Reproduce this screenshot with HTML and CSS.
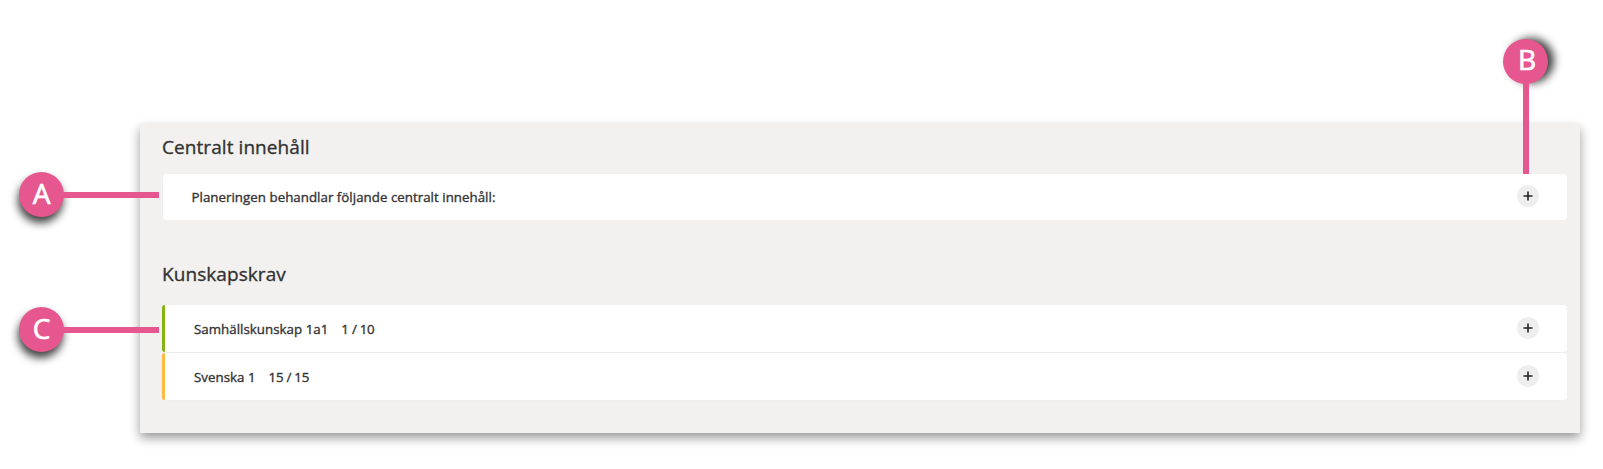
FILE: index.html
```html
<!DOCTYPE html>
<html lang="sv">
<head>
    <meta charset="UTF-8">
    <meta name="viewport" content="width=device-width, initial-scale=1.0">
    <title>Planering</title>
    <link rel="stylesheet" href="styles.css">
</head>
<body>
    <main class="panel">
        <section class="central">
            <h2>Centralt innehåll</h2>
            <div class="card">
                <span class="title">Planeringen behandlar följande centralt innehåll:</span>
                <button class="expand" aria-label="Visa">
                    <svg width="10" height="10" viewBox="0 0 10 10"><path d="M5 0.5V9.5M0.5 5H9.5"/></svg>
                </button>
            </div>
        </section>
        <section class="krav">
            <h2>Kunskapskrav</h2>
            <div class="card marked green">
                <span class="title">Samhällskunskap 1a1</span>
                <span class="count">1 / 10</span>
                <button class="expand" aria-label="Visa">
                    <svg width="10" height="10" viewBox="0 0 10 10"><path d="M5 0.5V9.5M0.5 5H9.5"/></svg>
                </button>
            </div>
            <div class="card marked yellow">
                <span class="title">Svenska 1</span>
                <span class="count">15 / 15</span>
                <button class="expand" aria-label="Visa">
                    <svg width="10" height="10" viewBox="0 0 10 10"><path d="M5 0.5V9.5M0.5 5H9.5"/></svg>
                </button>
            </div>
        </section>
    </main>

    <!-- callouts on top of the panel -->
    <div class="callout callout-a"><span class="badge">A</span></div>
    <div class="callout callout-b"><span class="badge">B</span></div>
    <div class="callout callout-c"><span class="badge">C</span></div>
</body>
</html>
```
FILE: styles.css
```css
* {
    box-sizing: border-box;
}

body {
    margin: 0;
    padding: 124px 23px 0 140px;
    height: 469px;
    overflow: hidden;
    position: relative;
    background-color: white;
    color: #333;
    font-family: "Open Sans", sans-serif;
    -webkit-text-stroke: 0.35px;
}

.panel {
    height: 309px;
    padding: 0 13px 0 22px;
    background-color: #f3f1f0;
    box-shadow: 0 5px 10px rgba(0, 0, 0, 0.4);
}

h2 {
    margin: 0;
    font-size: 19px;
    font-weight: 400;
    letter-spacing: 0.07px;
    line-height: 26px;
}

.central h2 {
    padding: 10px 0 14px;
}

.krav h2 {
    padding: 41px 0 18px;
}

.card {
    display: flex;
    align-items: center;
    height: 46px;
    padding: 0 28px 0 29px;
    background-color: white;
    border-radius: 3px;
    box-shadow: 0 0 1px #dcdce0;
    font-size: 13.3px;
    letter-spacing: 0.03px;
}

.central .card {
    margin-left: 0.5px;
}

.marked {
    height: 47px;
    border-left: 3px solid;
    padding-left: 29px;
}

.marked + .marked {
    margin-top: 1px;
}

.green {
    border-left-color: #86b212;
}

.yellow {
    border-left-color: #ffba42;
}

.count {
    margin-left: 13px;
    letter-spacing: -0.25px;
}

.expand {
    display: flex;
    align-items: center;
    justify-content: center;
    width: 22px;
    height: 22px;
    margin: 0 0 2px auto;
    padding: 0;
    border: none;
    border-radius: 50%;
    background-color: #eee;
}

.expand path {
    stroke: #222;
    stroke-width: 1.6;
}

.callout {
    position: absolute;
    display: flex;
    align-items: center;
}

.callout::after {
    content: "";
    flex: 1;
    background-color: #e6578f;
}

.callout-a,
.callout-c {
    left: 19px;
    width: 140px;
}

.callout-a {
    top: 172px;
}

.callout-c {
    top: 307px;
}

.callout-a::after,
.callout-c::after {
    height: 6px;
    margin-left: -1px;
}

.callout-b {
    left: 1503px;
    top: 39px;
    height: 135px;
    flex-direction: column;
}

.callout-b::after {
    width: 6px;
    margin-top: -1px;
}

.badge {
    width: 45px;
    height: 45px;
    border-radius: 50%;
    background-color: #e6578f;
    color: white;
    font-size: 28px;
    line-height: 43px;
    text-align: center;
    -webkit-text-stroke: 0.7px;
    box-shadow: -1px 6px 9px rgba(0, 0, 0, 0.75);
}

.callout-b .badge {
    line-height: 41px;
    padding-left: 3px;
    box-shadow: 6px -1px 9px rgba(0, 0, 0, 0.75);
}
```
